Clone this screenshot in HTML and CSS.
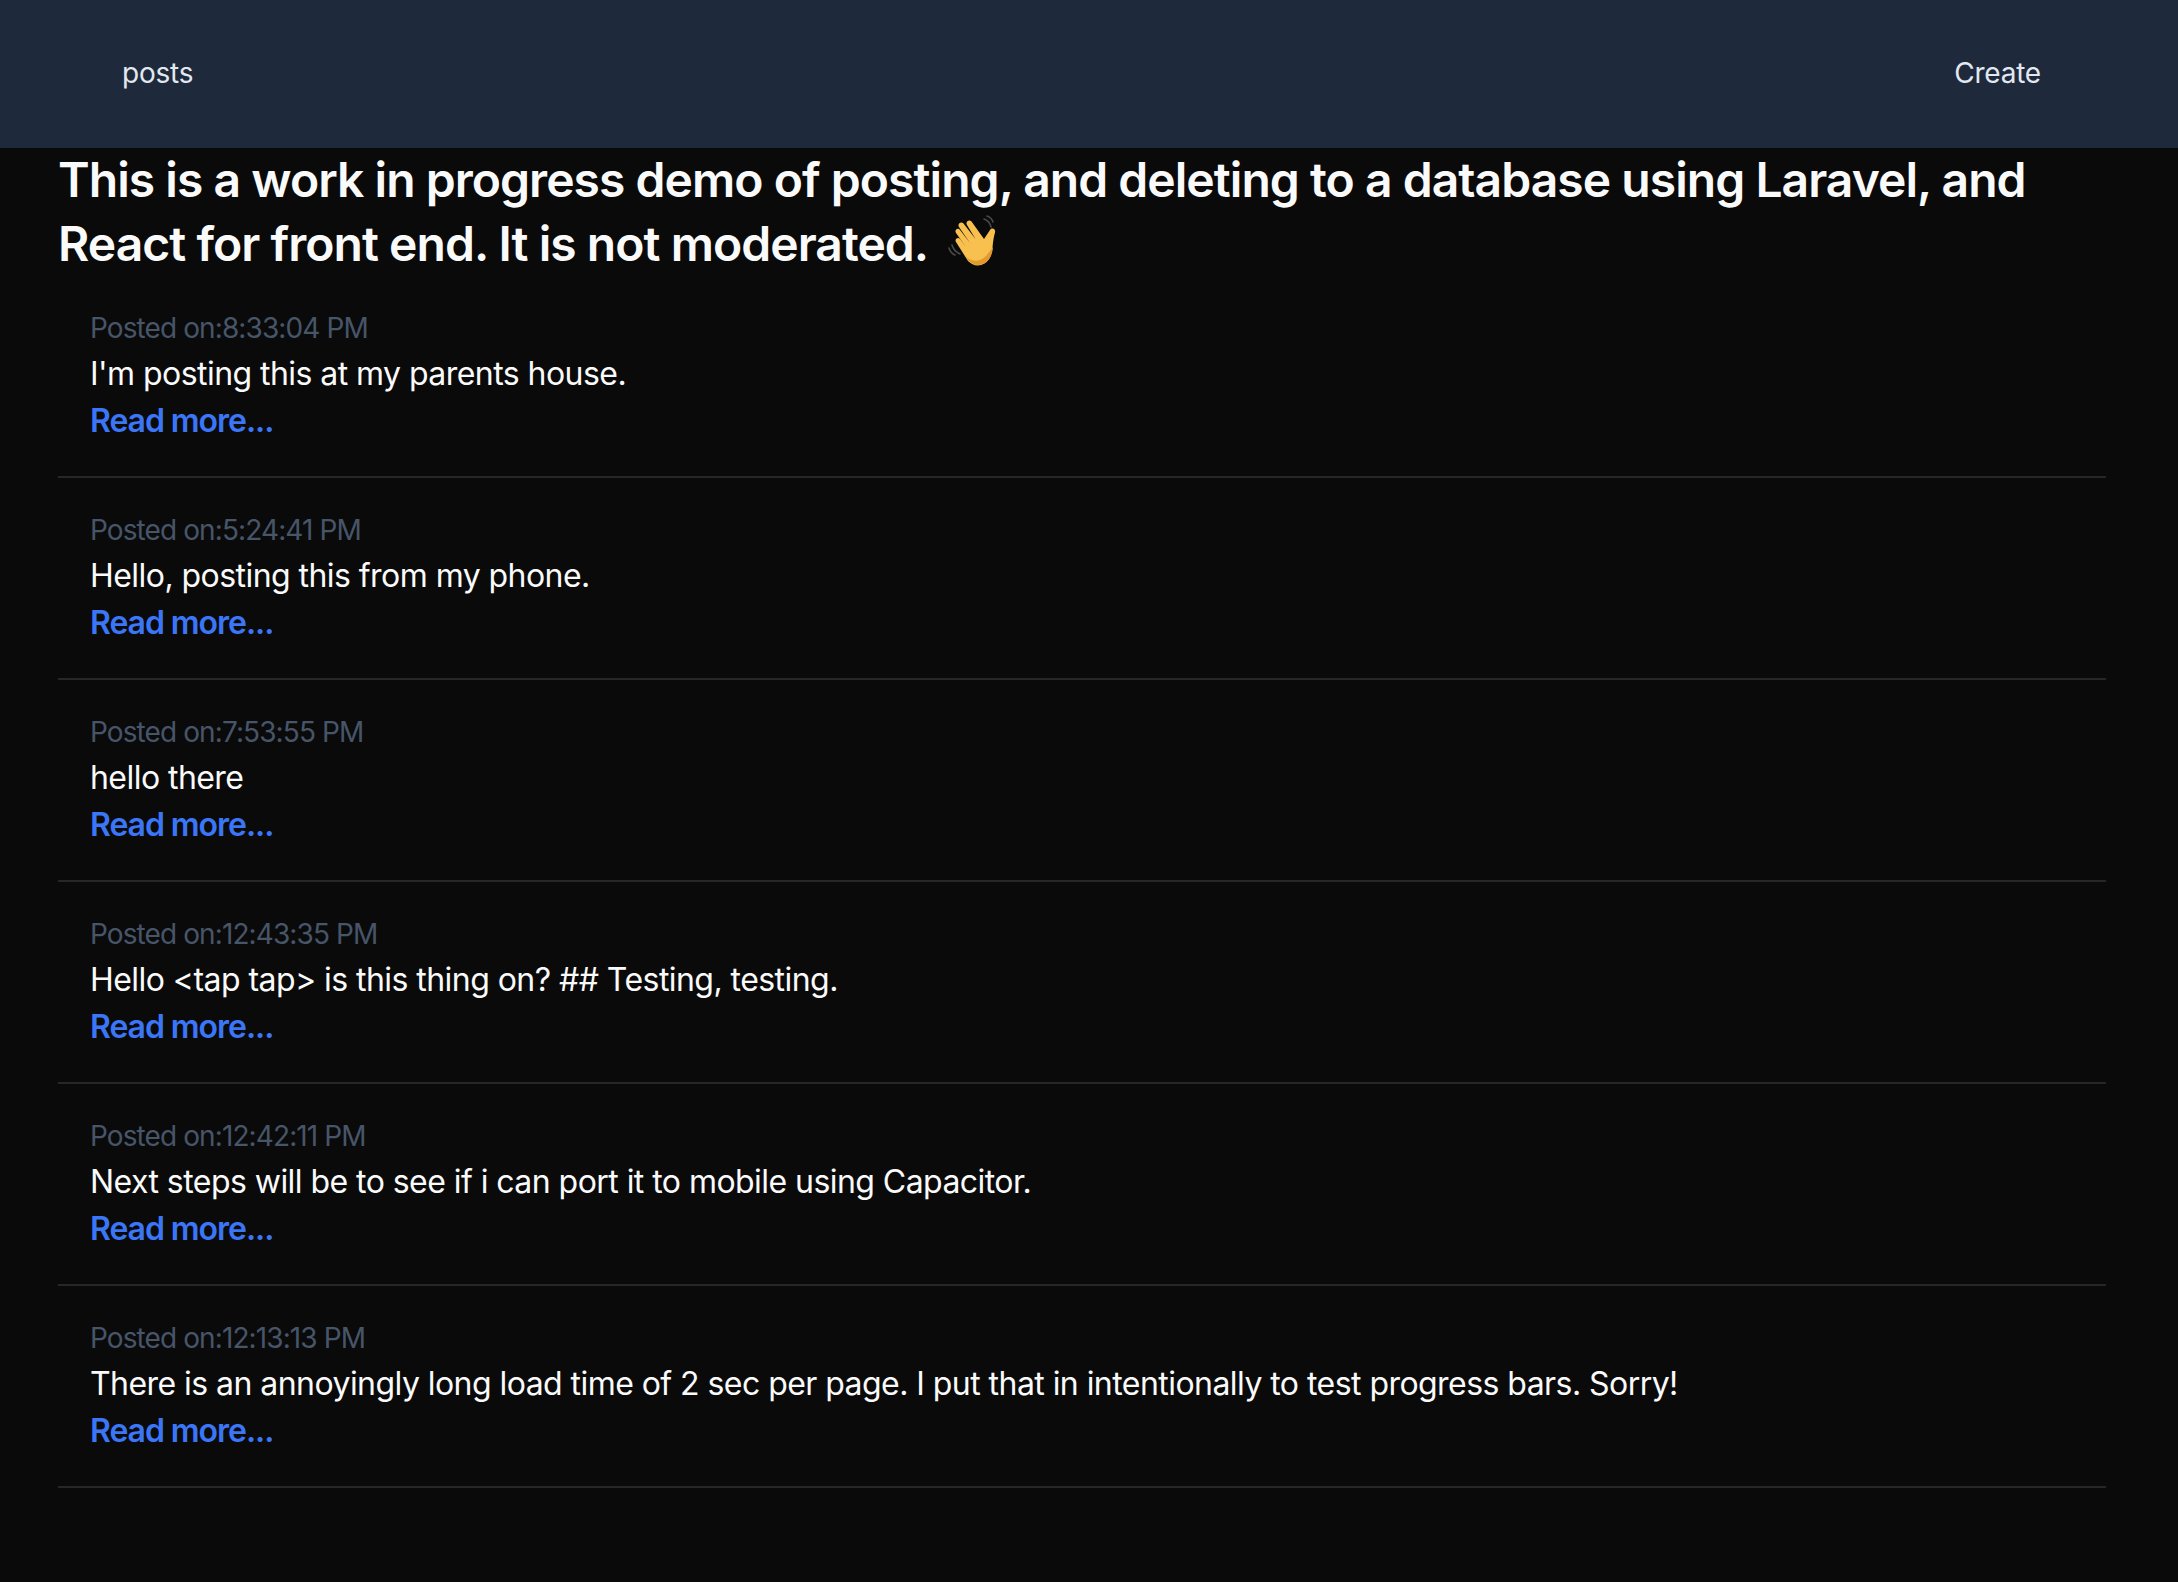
FILE: index.html
```html
<!DOCTYPE html>
<html lang="en">
<head>
  <meta charset="UTF-8" />
  <meta name="viewport" content="width=device-width, initial-scale=1.0"/>
  <title>Posts</title>
  <link rel="stylesheet" href="styles.css">
</head>
<body>

  <nav class="navbar">
    <a class="nav-link" href="#">posts</a>
    <a class="nav-link create" href="#">Create</a>
  </nav>

  <main class="content">
    <h1 class="intro">This is a work in progress demo of posting, and deleting to a database using Laravel, and React for front end. It is not moderated.
      <svg class="wave" viewBox="0 0 56 56" aria-hidden="true">
        <path d="M36 4c3 1 6 4 7 8M39 1c3 1 5 3 6 6M4 30c1 4 4 7 8 9M1 33c1 3 3 6 6 7" fill="none" stroke="#4a4a4a" stroke-width="1.6" stroke-linecap="round"/>
        <path d="M20 46 L8 27c-1.800-3 2-5.500 4-3l6 8-10-14c-2-3 2-6 4-3l10 13L11 12c-2-3 2-6 4.500-3.500l12 15.500L19 10c-2-3 2-6 4.500-3.500L36 24l6-9c2-3 6-1 5 2.500-1.500 5-2 10-2.500 15-.6 7-3 13-8 16-6 3.500-12 2-16.500-2.500z" fill="#f7c04f"/>
        <path d="M45 32c-.6 7-3 13-8 16-6 3.500-12 2-16.500-2.500L18 42c5 4 11 5 16 2 5-3 8-8 11-12z" fill="#e39a2c"/>
      </svg>
    </h1>

    <ul class="post-list">
      <li class="post">
        <p class="post-date">Posted on:8:33:04 PM</p>
        <p class="post-body">I'm posting this at my parents house.</p>
        <a class="read-more" href="#">Read more...</a>
      </li>
      <li class="post">
        <p class="post-date">Posted on:5:24:41 PM</p>
        <p class="post-body">Hello, posting this from my phone.</p>
        <a class="read-more" href="#">Read more...</a>
      </li>
      <li class="post">
        <p class="post-date">Posted on:7:53:55 PM</p>
        <p class="post-body">hello there</p>
        <a class="read-more" href="#">Read more...</a>
      </li>
      <li class="post">
        <p class="post-date">Posted on:12:43:35 PM</p>
        <p class="post-body">Hello &lt;tap tap&gt; is this thing on? ## Testing, testing.</p>
        <a class="read-more" href="#">Read more...</a>
      </li>
      <li class="post">
        <p class="post-date">Posted on:12:42:11 PM</p>
        <p class="post-body">Next steps will be to see if i can port it to mobile using Capacitor.</p>
        <a class="read-more" href="#">Read more...</a>
      </li>
      <li class="post">
        <p class="post-date">Posted on:12:13:13 PM</p>
        <p class="post-body">There is an annoyingly long load time of 2 sec per page. I put that in intentionally to test progress bars. Sorry!</p>
        <a class="read-more" href="#">Read more...</a>
      </li>
    </ul>
  </main>

</body>
</html>
```

FILE: styles.css
```css
* {
  box-sizing: border-box;
}

body {
  margin: 0;
  min-height: 100vh;
  background: #0a0a0a;
  color: #fafafa;
  font-family: Inter, "Noto Sans", sans-serif;
}

.navbar {
  height: 148px;
  background: #1e293b;
  display: flex;
  justify-content: space-between;
  align-items: center;
  padding: 0 137px 2px 122px;
}

.nav-link {
  color: #e2e8f0;
  font-size: 28px;
  letter-spacing: -0.2px;
  text-decoration: none;
}

.content {
  padding: 0 72px 0 58px;
}

.intro {
  margin: 0;
  font-size: 48px;
  line-height: 64px;
  font-weight: 600;
  letter-spacing: -0.95px;
}

.wave {
  width: 56px;
  height: 56px;
  vertical-align: -10px;
  margin-left: 10px;
}

.post-list {
  list-style: none;
  margin: 0;
  padding: 0;
}

.post {
  height: 202px;
  padding: 30px 32px 0;
  border-bottom: 2px solid #27272a;
}

.post-date {
  margin: 0;
  color: #475569;
  font-size: 28px;
  line-height: 44px;
  letter-spacing: -0.9px;
}

.post-body {
  margin: 0;
  font-size: 32px;
  line-height: 47px;
  letter-spacing: -0.55px;
}

.read-more {
  color: #3b76f6;
  font-size: 32px;
  line-height: 48px;
  font-weight: 600;
  letter-spacing: -1.05px;
  text-decoration: none;
}
```
